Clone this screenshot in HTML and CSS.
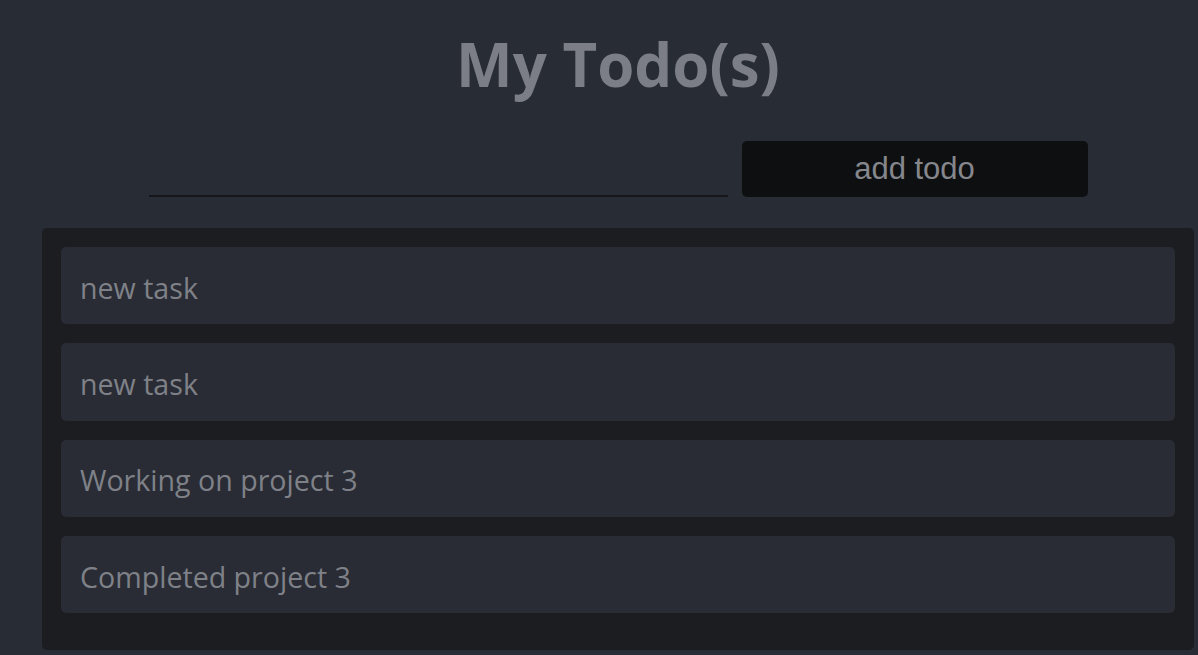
FILE: index.html
```html
<!DOCTYPE html>
<html>
<head>
<meta charset="utf-8">
<link rel="stylesheet" href="styles.css">
</head>
<body>
<div class="app">
  <h1 class="title">My Todo(s)</h1>
  <form class="add-form">
    <input class="todo-input" type="text">
    <button class="add-btn" type="button">add todo</button>
  </form>
  <ul class="todo-list">
    <li class="todo-item">new task</li>
    <li class="todo-item">new task</li>
    <li class="todo-item">Working on project 3</li>
    <li class="todo-item">Completed project 3</li>
  </ul>
</div>
</body>
</html>
```

FILE: styles.css
```css
html, body {
  margin: 0;
  padding: 0;
  background: #282c34;
  overflow: hidden;
}
body {
  font-family: "Open Sans", "Noto Sans", sans-serif;
  color: #808289;
}
.app {
  width: 1152px;
  margin-left: 42px;
  display: flex;
  flex-direction: column;
  align-items: center;
}
.title {
  margin: 23px 0 0;
  font-size: 60px;
  font-weight: 700;
  line-height: 83px;
  color: #7b7e86;
}
.add-form {
  display: flex;
  align-items: flex-end;
  gap: 14px;
  margin-top: 35px;
}
.todo-input {
  width: 579px;
  height: 41px;
  margin: 0;
  padding: 0;
  border: none;
  border-bottom: 2px solid #15171b;
  background: transparent;
  outline: none;
}
.add-btn {
  width: 346px;
  height: 56px;
  margin: 0;
  border: none;
  border-radius: 5px;
  background: #0e0f11;
  color: #85878c;
  font-family: "Liberation Sans", Arial, sans-serif;
  font-size: 31px;
}
.todo-list {
  list-style: none;
  align-self: stretch;
  margin: 31px 0 0;
  padding: 19px;
  background: #1b1d21;
  border-radius: 5px;
  display: flex;
  flex-direction: column;
  gap: 19px;
  height: 422px;
  box-sizing: border-box;
}
.todo-item {
  height: 77.3px;
  flex: none;
  box-sizing: border-box;
  display: flex;
  align-items: center;
  padding: 3px 19px 0;
  background: #292c34;
  border-radius: 5px;
  font-size: 28.6px;
  color: #7f8188;
}
```
